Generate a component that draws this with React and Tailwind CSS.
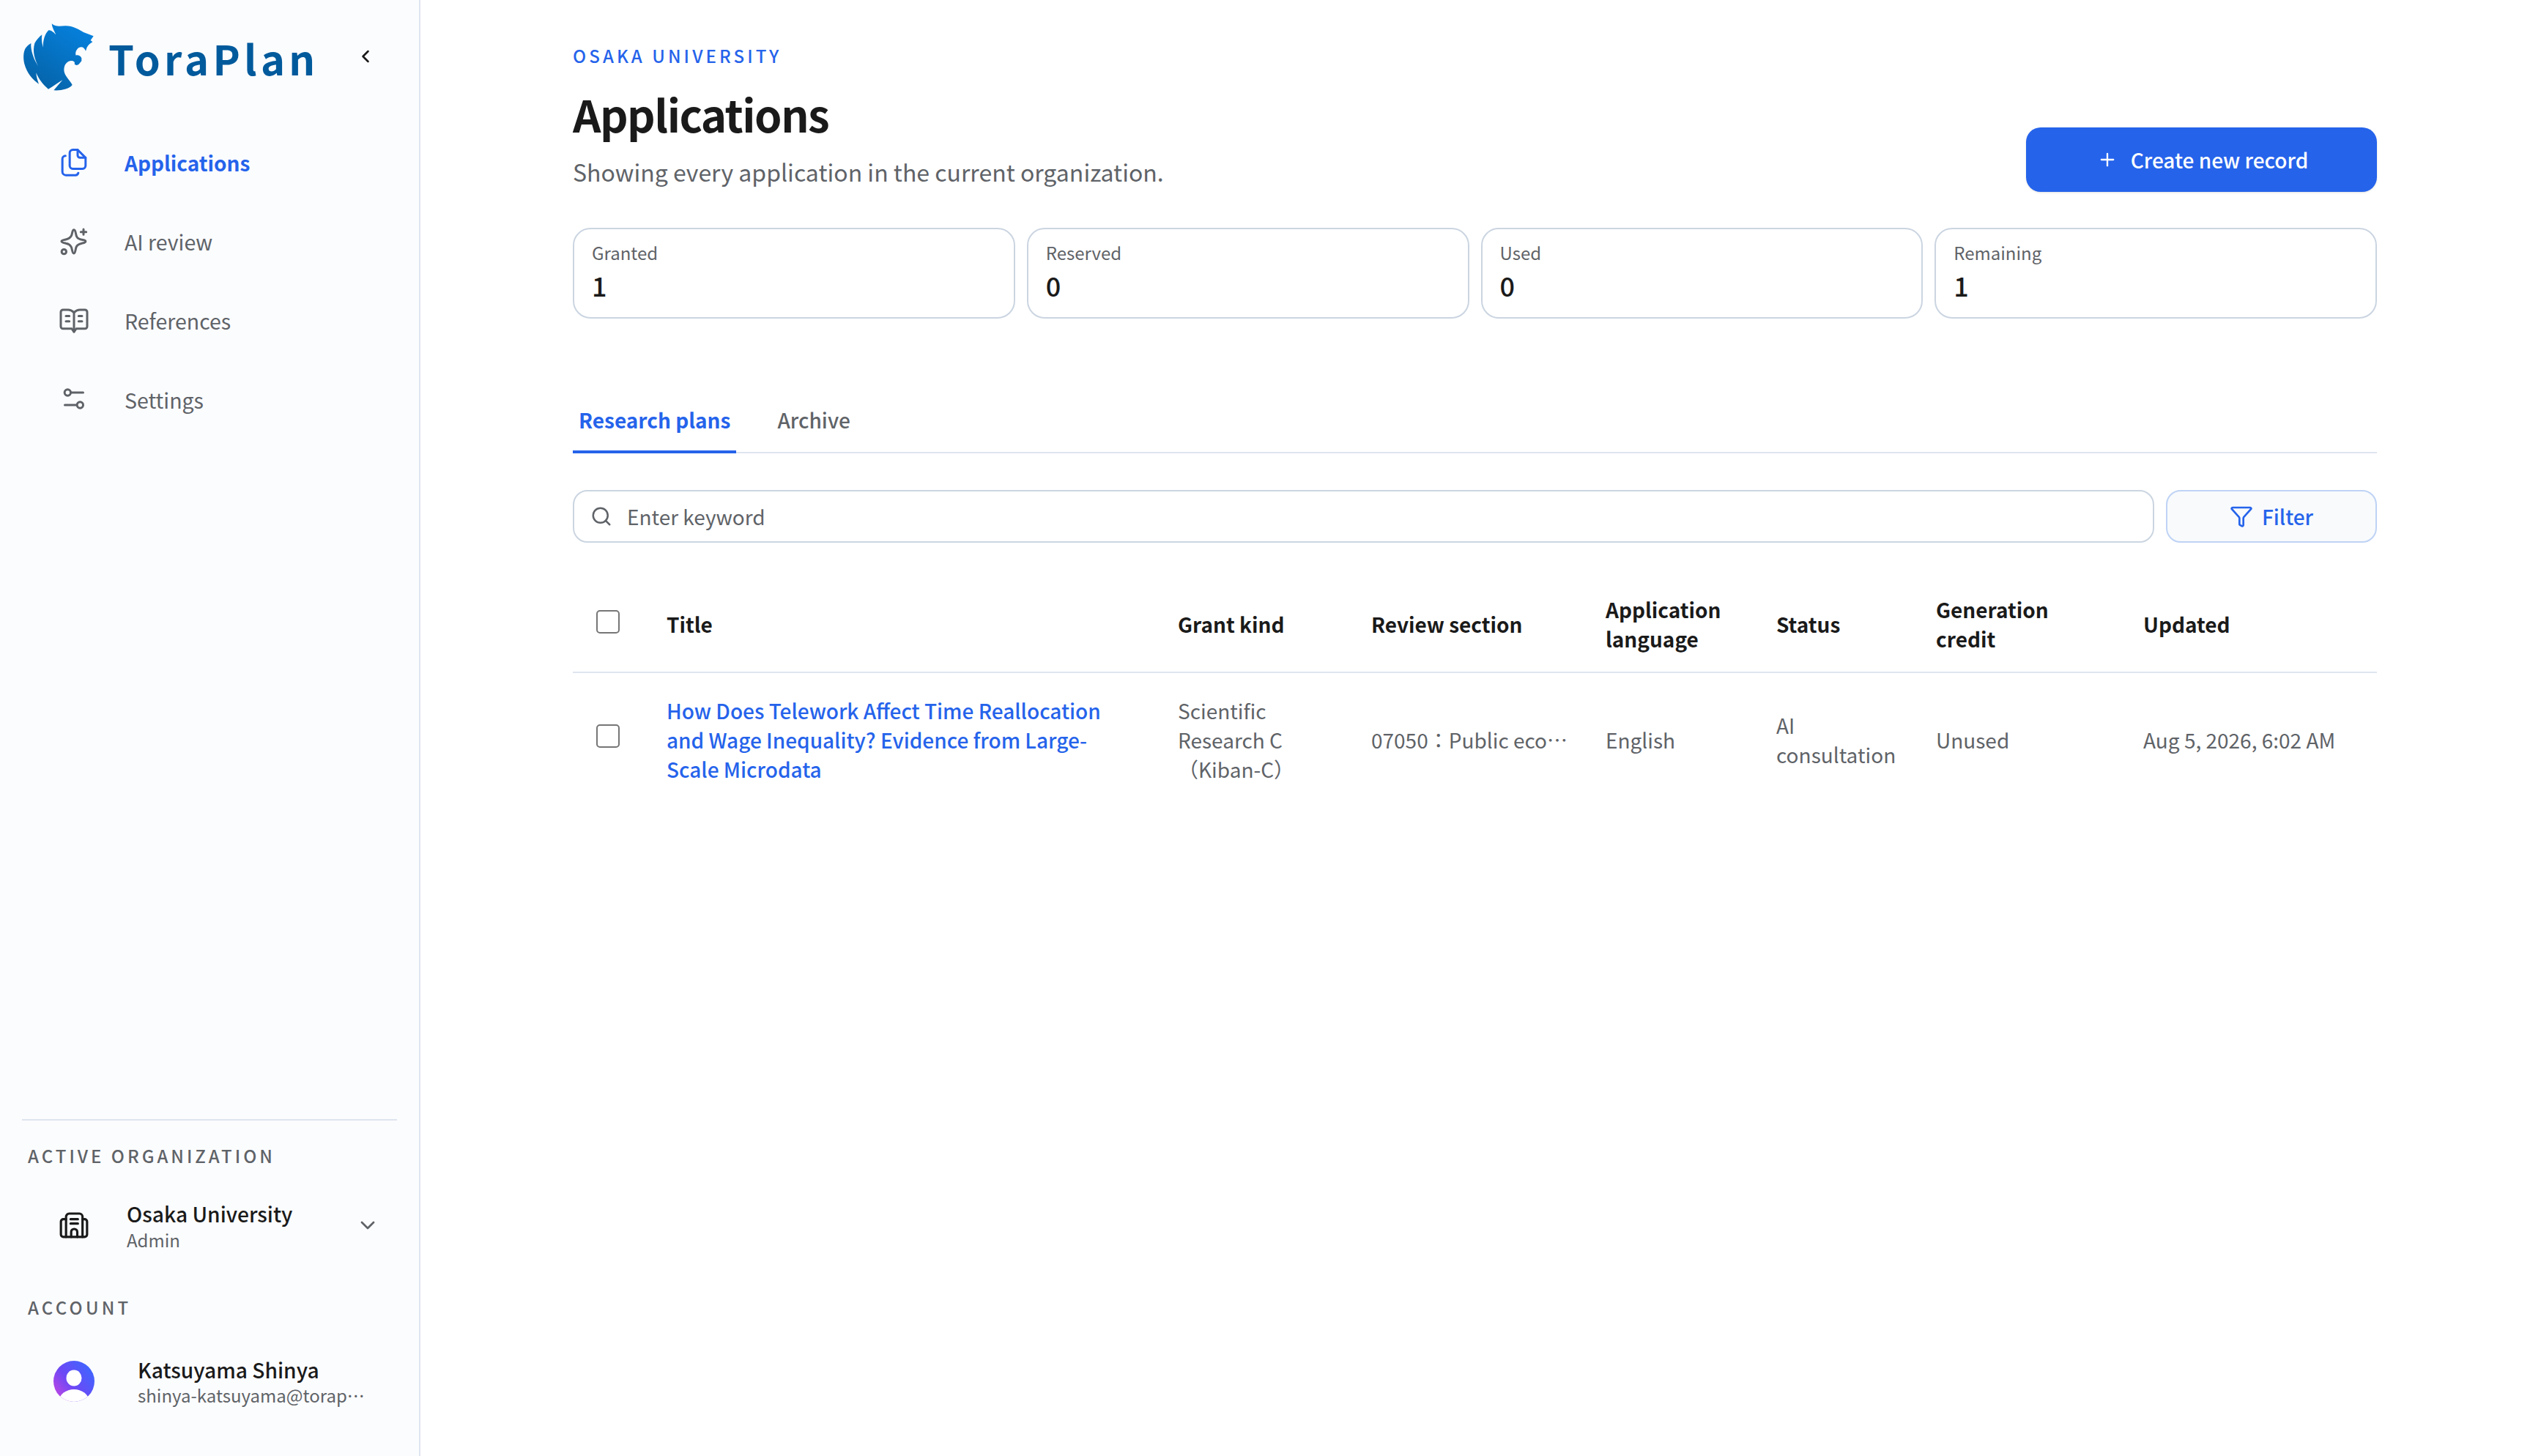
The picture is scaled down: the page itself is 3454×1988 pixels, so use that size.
import React from 'react';
import { ChevronDown, ChevronLeft, Funnel, Plus, Search } from 'lucide-react';

const FONT = "font-['Noto_Sans_CJK_JP','Noto_Sans',sans-serif]";

function Logo() {
  return (
    <svg viewBox="0 0 330 330" className="w-[110px] h-[110px] shrink-0" aria-hidden="true">
      <defs>
        <linearGradient id="toraLogo" x1="0.8" y1="0.05" x2="0.2" y2="0.95">
          <stop offset="0" stopColor="#0680dc" />
          <stop offset="1" stopColor="#0563a8" />
        </linearGradient>
      </defs>
      <path
        fill="url(#toraLogo)"
        d="M140 25 C155 38 170 36 195 34 C225 33 250 48 270 60 L311 76 L299 93 L307 100 C298 105 290 112 284 122 L279 137 C274 122 262 116 250 124 C240 131 235 145 239 155 C246 152 258 156 262 166 L262 178 L252 190 C246 196 238 197 233 190 C238 180 222 173 208 180 C193 188 187 207 192 226 C198 245 214 256 224 276 C212 292 178 300 148 298 L184 256 C165 268 145 282 126 293 C105 275 88 255 76 226 C77 243 82 258 87 272 C62 255 38 228 28 190 C22 165 24 140 32 126 C38 118 46 110 55 105 C53 135 66 170 85 200 C70 170 60 140 70 105 C77 92 88 80 100 70 C97 90 100 108 105 122 C103 95 112 65 127 52 C135 50 148 60 157 70 C150 55 141 40 140 25 Z"
      />
    </svg>
  );
}

function IconFiles({ className }) {
  return (
    <svg viewBox="0 0 24 24" fill="none" stroke="currentColor" strokeWidth="1.8" strokeLinecap="round" strokeLinejoin="round" className={className}>
      <path d="M15 1.5h-4A2.5 2.5 0 0 0 8.5 4v10.6a2.5 2.5 0 0 0 2.5 2.5h8a2.5 2.5 0 0 0 2.5-2.5V8z" />
      <path d="M15 1.5V6a2 2 0 0 0 2 2h4.5" />
      <path d="M5 6.500a2.500 2.500 0 0 0-2.500 2.500v10.500A2.800 2.800 0 0 0 5.300 22.300h8a2.300 2.300 0 0 0 2.200-1.800" />
    </svg>
  );
}

function IconSparkle({ className }) {
  return (
    <svg viewBox="0 0 24 24" fill="none" stroke="currentColor" strokeWidth="1.8" strokeLinecap="round" strokeLinejoin="round" className={className}>
      <path d="M12 2.300c1.500 0 1.300 3.600 2.200 5.500.8 1.800 2.600 2.400 5 2.700 1.300.2 2.300.6 2.300 1.300 0 1-1.500 1.200-3 1.500-2.500.5-3.900 1.300-4.600 3-.8 2-.7 5.300-2 5.300s-1.300-3-2-4.900c-.7-1.900-2.300-3-4.600-3.400-2-.4-3.500-.6-3.500-1.600 0-.9 1.600-1.100 3.500-1.500 2.400-.5 3.800-1.400 4.600-3.200.9-2 .6-4.700 2.100-4.700z" />
      <path d="M19.800 1.800v4.400M17.600 4h4.400" />
      <circle cx="3.800" cy="20.200" r="1.900" />
    </svg>
  );
}

function IconBook({ className }) {
  return (
    <svg viewBox="0 0 24 24" fill="none" stroke="currentColor" strokeWidth="1.8" strokeLinecap="round" strokeLinejoin="round" className={className}>
      <path d="M12 5.200C10.500 3.800 9.200 3 7.200 3H3a1.800 1.800 0 0 0-1.800 1.800v11.900A1.800 1.800 0 0 0 3 18.500h7.200L12 21l1.800-2.500H21a1.800 1.800 0 0 0 1.800-1.800V4.800A1.800 1.800 0 0 0 21 3h-4.200c-2 0-3.300.8-4.800 2.200z" />
      <path d="M12 5.200V21" />
      <path d="M5.400 8.100h2.800M5.400 12.400h2.800M15.800 8.100h2.800M15.800 12.400h2.800" />
    </svg>
  );
}

function IconSliders({ className }) {
  return (
    <svg viewBox="0 0 24 24" fill="none" stroke="currentColor" strokeWidth="1.8" strokeLinecap="round" strokeLinejoin="round" className={className}>
      <circle cx="6.800" cy="6" r="2.500" />
      <path d="M9.600 6h9.900" />
      <circle cx="17" cy="16.200" r="2.500" />
      <path d="M4.500 16.200h9.700" />
    </svg>
  );
}

function IconBuilding({ className }) {
  return (
    <svg viewBox="0 0 24 24" fill="none" stroke="currentColor" strokeWidth="1.900" strokeLinecap="round" strokeLinejoin="round" className={className}>
      <path d="M5.500 21.500V5A2.600 2.600 0 0 1 8.100 2.400h8.300A2.600 2.600 0 0 1 19 5v16.500" />
      <path d="M5.500 7H3.300a2 2 0 0 0-2 2v10.500a2 2 0 0 0 2 2h17.400a2 2 0 0 0 2-2V9a2 2 0 0 0-2-2H19" />
      <path d="M9.200 7h6M9.200 10.600h6" />
      <path d="M9.700 21.500v-4a2.500 2.500 0 0 1 5 0v4" />
    </svg>
  );
}

function Avatar() {
  return (
    <svg viewBox="0 0 56 56" className="w-[56px] h-[56px] shrink-0" aria-hidden="true">
      <defs>
        <linearGradient id="avatarBg" x1="0.95" y1="0.2" x2="0.1" y2="0.85">
          <stop offset="0" stopColor="#3f66ff" />
          <stop offset="0.6" stopColor="#6d48f5" />
          <stop offset="1" stopColor="#b646e6" />
        </linearGradient>
        <clipPath id="avatarClip">
          <circle cx="28" cy="28" r="28" />
        </clipPath>
      </defs>
      <circle cx="28" cy="28" r="28" fill="url(#avatarBg)" />
      <g clipPath="url(#avatarClip)" fill="#ffffff">
        <ellipse cx="28" cy="23.500" rx="10.500" ry="11" />
        <ellipse cx="28" cy="54" rx="20" ry="15" />
      </g>
    </svg>
  );
}

const navItems = [
  { label: 'Applications', Icon: IconFiles, active: true },
  { label: 'AI review', Icon: IconSparkle },
  { label: 'References', Icon: IconBook },
  { label: 'Settings', Icon: IconSliders },
];

const stats = [
  { label: 'Granted', value: '1' },
  { label: 'Reserved', value: '0' },
  { label: 'Used', value: '0' },
  { label: 'Remaining', value: '1' },
];

function Sidebar() {
  return (
    <aside className="w-[574px] h-screen shrink-0 flex flex-col bg-[#fbfcfe] border-r-2 border-[#dfe5ef]">
      <div className="flex items-center pl-[24px] pt-[24px] h-[134px]">
        <Logo />
        <span className="ml-[14px] text-[56px] leading-none font-bold tracking-[5.300px] text-[#005a9c]">ToraPlan</span>
        <ChevronLeft className="ml-[49px] mb-[4px] w-[28px] h-[28px] text-[#1a1a1a]" strokeWidth={2.200} />
      </div>
      <nav className="flex flex-col mt-[34px]">
        {navItems.map(({ label, Icon, active }) => (
          <div key={label} className="h-[108px] flex items-center pl-[81px]">
            <Icon className={`w-[40px] h-[40px] ${active ? 'text-[#2563eb]' : 'text-[#5f6368]'}`} />
            <span className={`ml-[49px] leading-[40px] ${active ? 'text-[28px] font-bold text-[#2563eb]' : 'text-[28.500px] text-[#5f6368]'}`}>{label}</span>
          </div>
        ))}
      </nav>
      <div className="mt-auto mx-[30px] border-t-2 border-[#dfe5ef] pb-[67px]">
        <div className="mt-[32px] ml-[8px] text-[24px] leading-[32px] font-medium tracking-[4px] text-[#5f6368]">ACTIVE ORGANIZATION</div>
        <div className="mt-[43px] flex items-center pl-[51px]">
          <IconBuilding className="w-[40px] h-[40px] text-[#1a1a1a]" />
          <div className="ml-[52px] flex-1">
            <div className="text-[28.200px] leading-[40px] font-medium text-[#1a1a1a]">Osaka University</div>
            <div className="text-[24px] leading-[32px] text-[#5f6368]">Admin</div>
          </div>
          <ChevronDown className="mr-[24px] w-[32px] h-[32px] text-[#5f6368]" strokeWidth={2} />
        </div>
        <div className="mt-[60px] ml-[8px] text-[24px] leading-[32px] font-medium tracking-[4.200px] text-[#5f6368]">ACCOUNT</div>
        <div className="mt-[50px] flex items-center pl-[43px]">
          <Avatar />
          <div className="ml-[59px] min-w-0">
            <div className="text-[28.200px] leading-[38px] font-medium text-[#1a1a1a]">Katsuyama Shinya</div>
            <div className="w-[314px] truncate text-[24px] leading-[32px] text-[#5f6368]">shinya-katsuyama@toraplan.com</div>
          </div>
        </div>
      </div>
    </aside>
  );
}

function ApplicationsTable() {
  const th = 'pl-[32px] pr-[16px] pt-[24px] pb-[25px] text-left text-[28px] leading-[40px] font-bold text-[#1a1a1a] align-middle';
  const td = 'pl-[32px] pr-[16px] py-[31px] text-[28px] leading-[40px] text-[#5f6368] align-middle';
  return (
    <table className="mt-[47px] w-full table-fixed border-collapse">
      <colgroup>
        <col className="w-[96px]" />
        <col className="w-[698px]" />
        <col className="w-[264px]" />
        <col className="w-[320px]" />
        <col className="w-[233px]" />
        <col className="w-[218px]" />
        <col className="w-[283px]" />
        <col />
      </colgroup>
      <thead>
        <tr className="border-b-2 border-[#dfe5ef]">
          <th className="py-[24px] text-center align-middle">
            <input type="checkbox" aria-label="Select all" className="appearance-none block mx-auto -mt-[8px] w-[32px] h-[32px] bg-white border-2 border-[#767676] rounded-[5px]" />
          </th>
          <th className={th}>Title</th>
          <th className={th}>Grant kind</th>
          <th className={th}>Review section</th>
          <th className={th}>Application language</th>
          <th className={th}>Status</th>
          <th className={th}>Generation<br />credit</th>
          <th className={th}>Updated</th>
        </tr>
      </thead>
      <tbody>
        <tr>
          <td className="py-[31px] text-center align-middle">
            <input type="checkbox" aria-label="Select row" className="appearance-none block mx-auto -mt-[10px] w-[32px] h-[32px] bg-white border-2 border-[#767676] rounded-[5px]" />
          </td>
          <td className="pl-[32px] pr-[68px] py-[31px] text-[28px] leading-[40px] align-middle">
            <span className="text-[#2563eb] font-medium">How Does Telework Affect Time Reallocation and Wage Inequality? Evidence from Large-Scale Microdata</span>
          </td>
          <td className={td}>Scientific Research C （Kiban-C）</td>
          <td className="pl-[32px] pr-[3px] py-[31px] text-[28px] leading-[40px] text-[#5f6368] align-middle">
            <span className="block truncate">07050：Public economics</span>
          </td>
          <td className={td}>English</td>
          <td className={td}>AI consultation</td>
          <td className={td}>Unused</td>
          <td className={`${td} whitespace-nowrap`}>Aug 5, 2026, 6:02 AM</td>
        </tr>
      </tbody>
    </table>
  );
}

export default function App() {
  return (
    <div className={`flex h-screen overflow-hidden bg-white ${FONT}`}>
      <Sidebar />
      <main className="flex-1 min-w-0 pl-[208px] pr-[209px] pt-[60px]">
        <div className="flex items-end justify-between">
          <div>
            <div className="text-[24px] leading-[32px] font-medium tracking-[4.100px] text-[#2563eb]">OSAKA UNIVERSITY</div>
            <h1 className="mt-[27px] text-[60px] leading-[72px] font-bold tracking-[-1.500px] text-[#1a1a1a]">Applications</h1>
            <p className="mt-[19px] text-[32px] leading-[48px] text-[#5f6368]">Showing every application in the current organization.</p>
          </div>
          <button type="button" className="mb-[-4px] w-[479px] h-[88px] pl-[3px] flex items-center justify-center gap-[18px] rounded-[20px] bg-[#2563eb] text-white text-[28px] font-medium shadow-sm">
            <Plus className="w-[28px] h-[28px]" strokeWidth={2} />
            Create new record
          </button>
        </div>

        <div className="mt-[53px] grid grid-cols-4 gap-[16px]">
          {stats.map((s) => (
            <div key={s.label} className="h-[124px] rounded-[24px] border-2 border-[#cbd5e1] bg-white px-[24px] pt-[16px]">
              <div className="text-[24px] leading-[32px] text-[#5f6368]">{s.label}</div>
              <div className="mt-[6px] text-[36px] leading-[44px] font-medium text-[#1a1a1a]">{s.value}</div>
            </div>
          ))}
        </div>

        <div className="mt-[104px] flex items-end border-b-2 border-[#dfe5ef]">
          <div className="h-[80px] -mb-[2px] px-[8px] pt-[14px] border-b-4 border-[#2563eb] text-[28px] leading-[40px] font-bold text-[#2563eb]">Research plans</div>
          <div className="h-[80px] -mb-[2px] ml-[56px] pt-[14px] text-[28px] leading-[40px] font-medium text-[#5f6368]">Archive</div>
        </div>

        <div className="mt-[50px] flex gap-[16px]">
          <div className="flex-1 h-[72px] flex items-center rounded-[20px] border-2 border-[#cbd5e1] bg-white pl-[22px]">
            <Search className="w-[30px] h-[30px] text-[#5f6368]" strokeWidth={2} />
            <span className="ml-[20px] text-[28px] leading-[40px] text-[#5f6368]">Enter keyword</span>
          </div>
          <button type="button" className="w-[288px] h-[72px] flex items-center justify-center gap-[12px] rounded-[20px] border-2 border-[#bfd3f5] bg-[#f8fafc] text-[28px] font-medium text-[#2563eb]">
            <Funnel className="w-[32px] h-[32px]" strokeWidth={2} />
            Filter
          </button>
        </div>

        <ApplicationsTable />
      </main>
    </div>
  );
}
